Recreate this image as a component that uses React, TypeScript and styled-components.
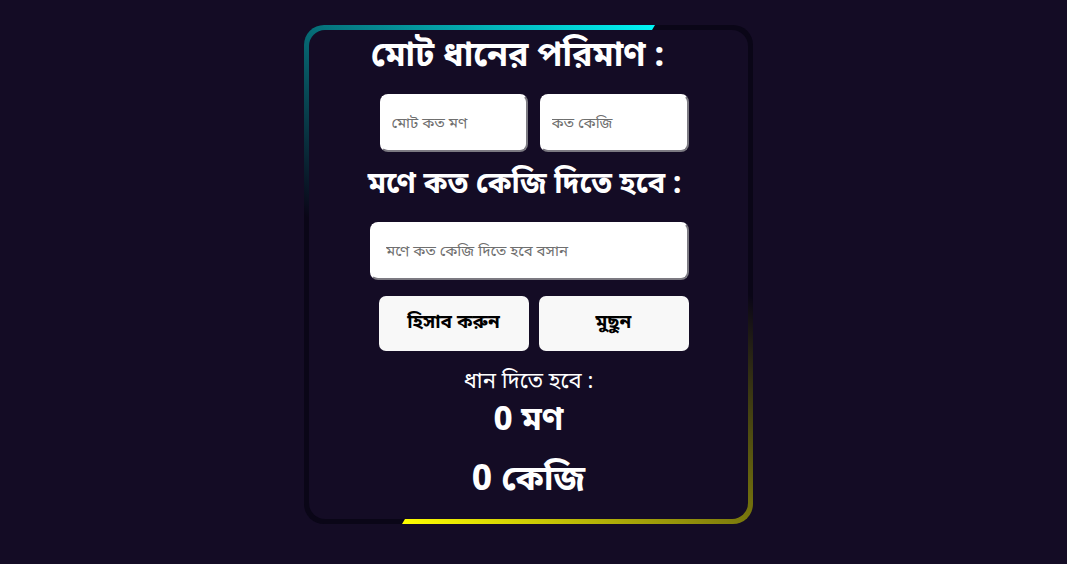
import React from "react";
import styled, { createGlobalStyle } from "styled-components";

const GlobalStyle = createGlobalStyle`
  html, body { margin: 0; padding: 0; background: #140c25; }
  body { font-family: "Noto Sans Bengali", "Noto Sans", sans-serif; }
  * { box-sizing: border-box; }
`;

const Page = styled.div`
  min-height: 564px;
  display: flex;
  justify-content: center;
  align-items: flex-start;
  padding-top: 25px;
`;

const Frame = styled.div`
  position: relative;
  width: 449px;
  height: 499px;
  margin-left: -10px;
  border-radius: 20px;
  overflow: hidden;
  padding: 5px;
  background: #0a0617;

  &::before {
    content: "";
    position: absolute;
    left: 0;
    top: 0;
    width: 351px;
    height: 250px;
    background: linear-gradient(to top right, rgba(20, 12, 37, 0) 12%, #00f5f5 100%);
    clip-path: polygon(0 0, 100% 0, calc(100% - 3px) 5px, 0 100%);
  }

  &::after {
    content: "";
    position: absolute;
    right: 0;
    bottom: 0;
    width: 351px;
    height: 270px;
    background: linear-gradient(to bottom left, rgba(20, 12, 37, 0) 8%, #ffff00 100%);
    clip-path: polygon(3px calc(100% - 5px), 100% 0, 100% 100%, 0 100%);
  }
`;

const Card = styled.div`
  position: relative;
  z-index: 1;
  height: 100%;
  background: #140c25;
  border-radius: 16px;
  display: flex;
  flex-direction: column;
  align-items: center;
  padding-top: 4px;
  color: #ffffff;
`;

const Title = styled.h2<{ $mt?: number; $size: number; $pr?: number }>`
  margin: ${(p) => p.$mt ?? 0}px 0 0;
  padding-right: ${(p) => p.$pr ?? 0}px;
  font-size: ${(p) => p.$size}px;
  font-weight: 700;
  line-height: 48px;
  color: #ffffff;
`;

const Row = styled.div<{ $mt?: number; $gap?: number; $ml?: number }>`
  display: flex;
  gap: ${(p) => p.$gap ?? 12}px;
  margin-top: ${(p) => p.$mt ?? 0}px;
  margin-left: ${(p) => p.$ml ?? 0}px;
`;

const Input = styled.input<{ $w: number; $pad: number }>`
  width: ${(p) => p.$w}px;
  height: 58px;
  border-radius: 8px;
  border: 2px solid #ffffff;
  border-right-color: #7c7a82;
  border-bottom-color: #7c7a82;
  background: #ffffff;
  padding: 2px ${(p) => p.$pad}px 0;
  font-family: "Noto Sans Bengali", "Noto Sans", sans-serif;
  font-size: 15px;
  color: #222;
  outline: none;
  &::placeholder { color: #6f6f6f; }
`;

const Button = styled.button`
  width: 150px;
  height: 55px;
  border: none;
  border-radius: 7px;
  background: #f8f8f8;
  color: #000000;
  font-family: "Noto Sans Bengali", "Noto Sans", sans-serif;
  font-size: 19px;
  font-weight: 700;
  cursor: pointer;
`;

const Label = styled.div`
  margin-top: 17px;
  font-size: 22px;
  line-height: 30px;
`;

const Result = styled.div<{ $size: number; $mt: number }>`
  margin-top: ${(p) => p.$mt}px;
  font-size: ${(p) => p.$size}px;
  font-weight: 700;
  line-height: 1.3;
`;

export default function App() {
  return (
    <>
      <GlobalStyle />
      <Page>
        <Frame>
          <Card>
            <Title $size={34} $pr={22}>মোট ধানের পরিমাণ :</Title>
            <Row $mt={12} $ml={11}>
              <Input $w={148} $pad={10} placeholder="মোট কত মণ" />
              <Input $w={149} $pad={10} placeholder="কত কেজি" />
            </Row>
            <Title $size={29.5} $mt={10} $pr={8}>মণে কত কেজি দিতে হবে :</Title>
            <Row $mt={12} $ml={2}>
              <Input $w={319} $pad={14} placeholder="মণে কত কেজি দিতে হবে বসান" />
            </Row>
            <Row $mt={16} $gap={10} $ml={10}>
              <Button>হিসাব করুন</Button>
              <Button>মুছুন</Button>
            </Row>
            <Label>ধান দিতে হবে :</Label>
            <Result $size={33} $mt={3}>0 মণ</Result>
            <Result $size={35} $mt={15}>0 কেজি</Result>
          </Card>
        </Frame>
      </Page>
    </>
  );
}
